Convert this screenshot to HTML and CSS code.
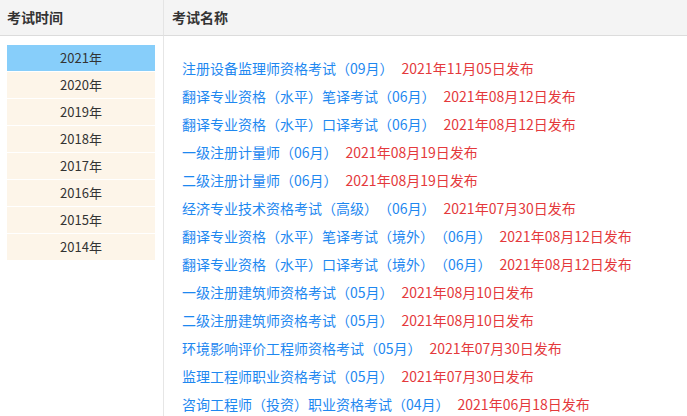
FILE: index.html
```html
<!DOCTYPE html>
<html lang="zh-CN">
<head>
    <meta charset="UTF-8">
    <title>考试列表</title>
    <link rel="stylesheet" href="styles.css">
</head>
<body>
    <div class="exam-board">
        <div class="head head-year">考试时间</div>
        <div class="head head-name">考试名称</div>

        <!-- 年份列表 -->
        <div class="years">
            <div class="year active">2021年</div>
            <div class="year">2020年</div>
            <div class="year">2019年</div>
            <div class="year">2018年</div>
            <div class="year">2017年</div>
            <div class="year">2016年</div>
            <div class="year">2015年</div>
            <div class="year">2014年</div>
        </div>

        <!-- 考试列表 -->
        <ul class="exams">
            <li><a href="#">注册设备监理师资格考试（09月）</a><span class="date">2021年11月05日发布</span></li>
            <li><a href="#">翻译专业资格（水平）笔译考试（06月）</a><span class="date">2021年08月12日发布</span></li>
            <li><a href="#">翻译专业资格（水平）口译考试（06月）</a><span class="date">2021年08月12日发布</span></li>
            <li><a href="#">一级注册计量师（06月）</a><span class="date">2021年08月19日发布</span></li>
            <li><a href="#">二级注册计量师（06月）</a><span class="date">2021年08月19日发布</span></li>
            <li><a href="#">经济专业技术资格考试（高级）（06月）</a><span class="date">2021年07月30日发布</span></li>
            <li><a href="#">翻译专业资格（水平）笔译考试（境外）（06月）</a><span class="date">2021年08月12日发布</span></li>
            <li><a href="#">翻译专业资格（水平）口译考试（境外）（06月）</a><span class="date">2021年08月12日发布</span></li>
            <li><a href="#">一级注册建筑师资格考试（05月）</a><span class="date">2021年08月10日发布</span></li>
            <li><a href="#">二级注册建筑师资格考试（05月）</a><span class="date">2021年08月10日发布</span></li>
            <li><a href="#">环境影响评价工程师资格考试（05月）</a><span class="date">2021年07月30日发布</span></li>
            <li><a href="#">监理工程师职业资格考试（05月）</a><span class="date">2021年07月30日发布</span></li>
            <li><a href="#">咨询工程师（投资）职业资格考试（04月）</a><span class="date">2021年06月18日发布</span></li>
        </ul>
    </div>
</body>
</html>
```

FILE: styles.css
```css
body {
    margin: 0;
    font-family: "Noto Sans CJK SC", "Noto Sans", sans-serif;
    font-size: 14px;
    color: #333;
    background-color: #fff;
    text-spacing-trim: space-all;
}

.exam-board {
    display: grid;
    grid-template-columns: 164px 1fr;
    min-height: 100vh;
}

.head {
    height: 35px;
    line-height: 35px;
    background-color: #f4f4f4;
    border-bottom: 1px solid #dcdcdc;
    font-weight: bold;
    color: #333;
}

.head-year {
    padding-left: 7px;
    border-right: 1px solid #e4e4e4;
}

.head-name {
    padding-left: 8px;
}

.years {
    padding: 9px 8px 0 7px;
    border-right: 1px solid #e6e6e6;
    display: flex;
    flex-direction: column;
    gap: 1px;
}

.year {
    height: 26px;
    line-height: 26px;
    text-align: center;
    font-size: 13px;
    background-color: #fdf5e9;
    color: #333;
}

.year.active {
    background-color: #87cefa;
}

.exams {
    list-style: none;
    margin: 0;
    padding: 18px 0 0 18px;
}

.exams li {
    height: 28px;
    line-height: 28px;
    white-space: nowrap;
}

.exams a {
    color: #1e88f0;
    text-decoration: none;
}

.exams .date {
    margin-left: 8px;
    color: #e4393c;
}
```
